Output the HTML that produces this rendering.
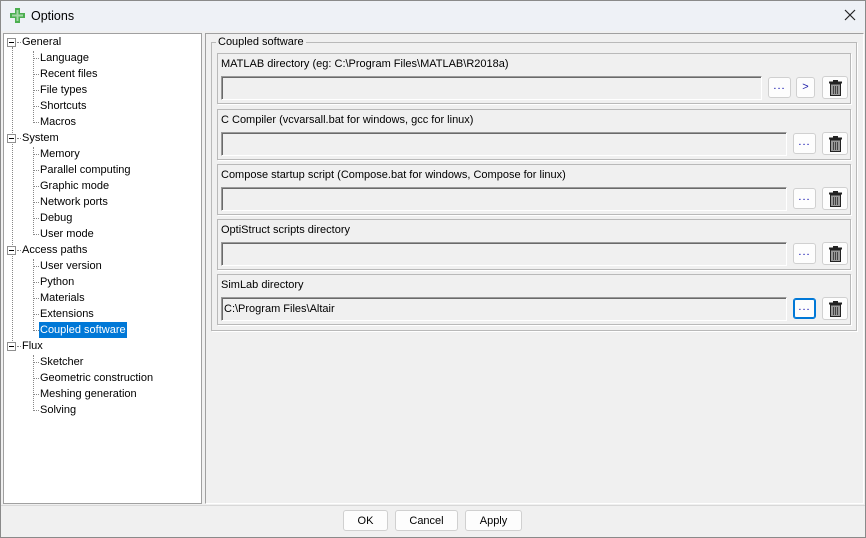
<!DOCTYPE html><html><head><style>
*{margin:0;padding:0;box-sizing:border-box}
body{width:866px;height:538px;background:#f0f0f0;font-family:"Liberation Sans",sans-serif;font-size:11px;color:#000;position:relative;overflow:hidden}
.a{position:absolute}
.title{left:0;top:0;width:866px;height:31px;background:#eef1f6}
.tree{left:3px;top:33px;width:199px;height:471px;background:#fff;border:1px solid #a0a0a0}
.rp{left:205px;top:33px;width:659px;height:471px;border:1px solid #a0a0a0;border-right-color:#fff;border-bottom-color:#fff}
.gb{border:1px solid #b9b9b9;box-shadow:1px 1px 0 #fff}
.inp{background:#f0f0f0;border:1px solid #9a9a9a;border-right-color:#fff;border-bottom-color:#fff;box-shadow:inset 1px 1px 0 #6a6a6a;padding:5px 2px;font-size:11px}
.btn{background:#fdfdfd;border:1px solid #d0d0d0;border-radius:3px;text-align:center;line-height:19px}
.t{position:absolute;white-space:nowrap;line-height:16px}
.exp{position:absolute;width:9px;height:9px;border:1px solid #8f8f8f;background:#fff}
.exp:after{content:"";position:absolute;left:1px;top:3px;width:5px;height:1px;background:#000}
.vl{position:absolute;border-left:1px dotted #888;width:0}
.hl{position:absolute;border-top:1px dotted #888;height:0}
</style></head><body>
<div class="a title"></div>
<div class="a" style="left:0;top:0;width:866px;height:538px;border:1px solid #8a8a8a;z-index:9;pointer-events:none"></div>
<svg class="a" style="left:9px;top:7px" width="17" height="17" viewBox="0 0 17 17"><path d="M6 1h5v5h5v5h-5v5H6v-5H1V6h5z" fill="#4caf50"/><path d="M8.5 3v11M3 8.5h11" stroke="#a5d6a7" stroke-width="2"/></svg>
<div class="t" style="left:31px;top:8px;font-size:12.5px">Options</div>
<svg class="a" style="left:844px;top:9px" width="12" height="12" viewBox="0 0 12 12"><path d="M1 1l10 10M11 1L1 11" stroke="#222" stroke-width="1.2"/></svg>
<div class="a tree">
<div class="vl" style="left:8px;top:13px;height:302px"></div>
<div class="vl" style="left:29px;top:17px;height:72px"></div>
<div class="vl" style="left:29px;top:113px;height:88px"></div>
<div class="vl" style="left:29px;top:225px;height:72px"></div>
<div class="vl" style="left:29px;top:321px;height:56px"></div>
</div>
<div id="tr"></div>
<script>
var items=[["General",0],["Language",1],["Recent files",1],["File types",1],["Shortcuts",1],["Macros",1],["System",0],["Memory",1],["Parallel computing",1],["Graphic mode",1],["Network ports",1],["Debug",1],["User mode",1],["Access paths",0],["User version",1],["Python",1],["Materials",1],["Extensions",1],["Coupled software",1],["Flux",0],["Sketcher",1],["Geometric construction",1],["Meshing generation",1],["Solving",1]];
var h="";items.forEach(function(it,i){var y=34+i*16;
if(it[1]==0){h+='<div class="exp" style="left:7px;top:'+(y+4)+'px"></div><div class="hl" style="left:17px;top:'+(y+8)+'px;width:4px"></div><div class="t" style="left:22px;top:'+y+'px">'+it[0]+'</div>';}
else{h+='<div class="hl" style="left:33px;top:'+(y+8)+'px;width:6px"></div>';
var sel=it[0]=="Coupled software";
h+='<div class="t" style="left:39px;top:'+y+'px;padding:0 1px;'+(sel?'background:#0078d7;color:#fff':'')+'">'+it[0]+'</div>';}});
document.getElementById("tr").innerHTML=h;
</script>
<div class="a rp"></div>
<div class="a gb" style="left:211px;top:42px;width:646px;height:289px"></div>
<div class="t" style="left:216px;top:34px;background:#f0f0f0;padding:0 2px">Coupled software</div>
<div id="bx"></div>
<script>
var bx=[["MATLAB directory (eg: C:\\Program Files\\MATLAB\\R2018a)",53,1,""],["C Compiler (vcvarsall.bat for windows, gcc for linux)",109,0,""],["Compose startup script (Compose.bat for windows, Compose for linux)",164,0,""],["OptiStruct scripts directory",219,0,""],["SimLab directory",274,0,"C:\\Program Files\\Altair"]];
var trash='<svg width="13" height="16" viewBox="0 0 13 16"><rect x="0" y="1.5" width="13" height="2" fill="#222"/><rect x="4" y="0" width="5" height="2" fill="#222"/><rect x="1.5" y="4" width="10" height="11.5" fill="#999" stroke="#222"/><path d="M4.5 6v8M6.5 6v8M8.5 6v8" stroke="#444"/></svg>';
var s="";bx.forEach(function(b,i){var y=b[1];
s+='<div class="a gb" style="left:217px;top:'+y+'px;width:634px;height:51px"></div>';
s+='<div class="t" style="left:221px;top:'+(y+3)+'px">'+b[0]+'</div>';
var w=b[2]?541:566;
s+='<div class="a inp" style="left:221px;top:'+(y+23)+'px;width:'+w+'px;height:24px">'+b[3]+'</div>';
var bl=b[2]?768:793;
s+='<div class="a btn" style="left:'+bl+'px;top:'+(y+24)+'px;width:23px;height:21px;'+(i==4?'border:1px solid #0078d7;box-shadow:inset 0 0 0 1px #0078d7':'')+'"><span style="color:#00a;letter-spacing:1px;position:relative;top:-1px">...</span></div>';
if(b[2])s+='<div class="a btn" style="left:796px;top:'+(y+24)+'px;width:19px;height:21px;color:#22a">&gt;</div>';
s+='<div class="a btn" style="left:822px;top:'+(y+23)+'px;width:26px;height:23px;padding-top:3px;line-height:0">'+trash+'</div>';});
document.getElementById("bx").innerHTML=s;
</script>
<div class="a" style="left:0;top:505px;width:866px;height:1px;background:#d8d8d8"></div>
<div class="a btn" style="left:343px;top:510px;width:45px;height:21px;line-height:20px">OK</div>
<div class="a btn" style="left:395px;top:510px;width:63px;height:21px;line-height:20px">Cancel</div>
<div class="a btn" style="left:465px;top:510px;width:57px;height:21px;line-height:20px">Apply</div>
</body></html>
